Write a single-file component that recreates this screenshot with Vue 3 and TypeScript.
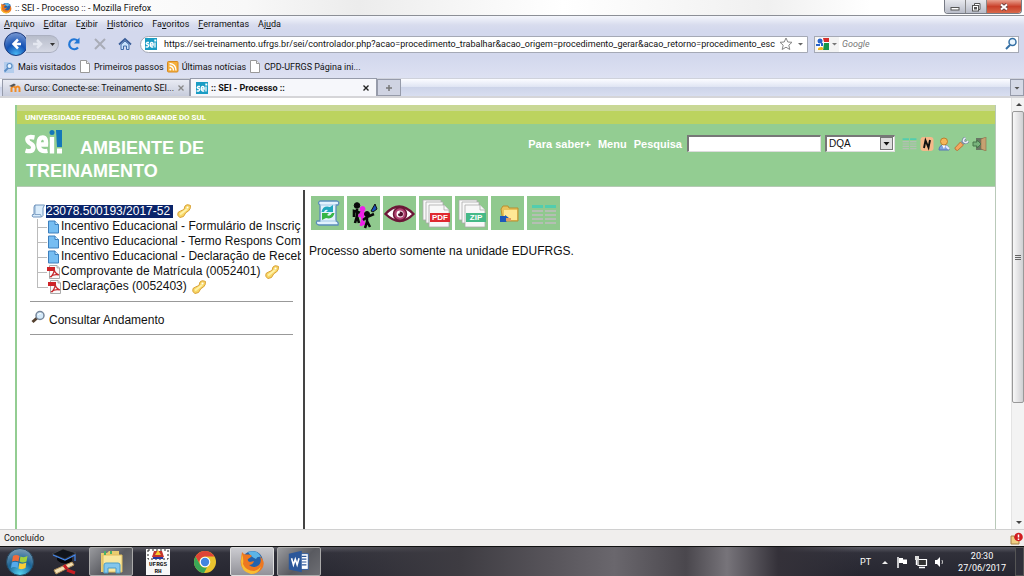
<script setup lang="ts">
import { ref } from 'vue'

const menus: [string, string, string][] = [
  ['', 'A', 'rquivo'], ['', 'E', 'ditar'], ['E', 'x', 'ibir'], ['', 'H', 'istórico'],
  ['Fa', 'v', 'oritos'], ['', 'F', 'erramentas'], ['Aj', 'u', 'da'],
]
const bookmarks = [
  { label: 'Mais visitados', kind: 'search' },
  { label: 'Primeiros passos', kind: 'page' },
  { label: 'Últimas notícias', kind: 'rss' },
  { label: 'CPD-UFRGS Página ini...', kind: 'page' },
]
const documents = [
  { label: 'Incentivo Educacional - Formulário de Inscriçã', pdf: false },
  { label: 'Incentivo Educacional - Termo Respons Comp', pdf: false },
  { label: 'Incentivo Educacional - Declaração de Recebi', pdf: false },
  { label: 'Comprovante de Matrícula (0052401)', pdf: true },
  { label: 'Declarações (0052403)', pdf: true },
]
const url = ref('https://sei-treinamento.ufrgs.br/sei/controlador.php?acao=procedimento_trabalhar&acao_origem=procedimento_gerar&acao_retorno=procedimento_esc')
const webSearch = ref('')
const pesquisa = ref('')
const unidade = ref('DQA')
</script>

<template>
  <div class="desktop">
    <svg class="defs" aria-hidden="true">
      <symbol id="key" viewBox="0 0 14 14">
        <path d="M8 2Q10 0 12 1L13.500 1.500Q13.800 5 11.500 7L9 8.500L8 10L6.500 12.500L3 13.500L.8 11.500L1 8.500L3.500 7L7 5.500Z" fill="#f8d766" stroke="#d9a136" />
        <path d="M3 10.500L10 5" stroke="#fff2a8" stroke-width="2" /><circle cx="10.500" cy="3.500" r="1" fill="#fff" />
      </symbol>
      <symbol id="page" viewBox="0 0 12 13">
        <path d="M1.500.5H7.500L10.500 3.500V12.500H1.500Z" fill="#fff" stroke="#999" /><path d="M7.500.5V3.500H10.500" fill="#eee" stroke="#999" />
      </symbol>
      <symbol id="sei" viewBox="0 0 12 12">
        <rect width="12" height="12" fill="#1a9cc4" />
        <g fill="none" stroke="#fff" stroke-width="1.300"><path d="M4 4.500H2Q.5 5.500 2 6.500H3Q4.300 8 2.800 9H.6M5.200 7H8.200Q8.200 4.500 6.700 4.500Q5.200 4.500 5.200 7Q5.300 9.200 8.300 9M10 4.500V9.500" /></g>
        <rect x="9.300" y="1.500" width="2" height="2" fill="#fff" />
      </symbol>
      <symbol id="grid" viewBox="0 0 26 24">
        <path d="M1 3.500H12M14 3.500H25" stroke="#52cdae" stroke-width="3" />
        <path d="M1 8H12M14 8H25M1 12H12M14 12H25M1 16H12M14 16H25M1 20H12M14 20H25" stroke="#b4bfb3" stroke-width="2" />
      </symbol>
      <symbol id="firefox" viewBox="0 0 26 26">
        <circle cx="13.500" cy="12.500" r="10.500" fill="#2463ac" /><path d="M9 3Q18 0 22 8Q18 7 17 10Q12 8 9 3Z" fill="#5cb4e6" />
        <path d="M3 3Q5 6 8 5.500Q12 5 13 7Q11 9 9 10Q8 12 11 13L15 12Q14 16 10 16Q15 20 20 16Q23 13 21 7Q28 14 22 21Q16 27 8 23Q0 18 2 10Z" fill="#ed7720" />
        <path d="M3 5Q5 10 4 15Q7 22 15 22Q20 21 22 17Q20 25 12 25Q2 23 2 12Z" fill="#f9bd32" />
      </symbol>
    </svg>

    <header class="titlebar">
      <svg class="i12" viewBox="0 0 26 26"><use href="#firefox" /></svg>
      <h1>:: SEI - Processo :: - Mozilla Firefox</h1>
      <div class="winbtns">
        <button aria-label="Minimizar"><svg width="10" height="12" viewBox="0 0 10 12"><rect x="1" y="6.500" width="8" height="2.500" fill="#fff" stroke="#555" /></svg></button>
        <button aria-label="Restaurar"><svg width="10" height="12" viewBox="0 0 10 12"><path d="M3.500 4V2.500H9V8.500H7.500" fill="#fff" stroke="#555" /><rect x="1.500" y="4.500" width="6" height="5.500" fill="#fff" stroke="#555" /><rect x="3.500" y="6.500" width="2" height="1.500" fill="none" stroke="#555" /></svg></button>
        <button class="close" aria-label="Fechar"><svg width="10" height="12" viewBox="0 0 10 12"><path d="M2 3.500L8 8.500M8 3.500L2 8.500" stroke="#6d4444" stroke-width="3.600" /><path d="M2 3.500L8 8.500M8 3.500L2 8.500" stroke="#fff" stroke-width="2" /></svg></button>
      </div>
    </header>

    <nav class="menubar">
      <button v-for="m in menus" :key="m[1] + m[2]">{{ m[0] }}<u>{{ m[1] }}</u>{{ m[2] }}</button>
    </nav>

    <div class="navbar">
      <div class="backfwd">
        <button class="back" aria-label="Voltar"><svg width="24" height="24" viewBox="0 0 24 24"><defs><radialGradient id="bg" cx=".5" cy=".95" r=".9"><stop offset="0" stop-color="#48b8f4" /><stop offset=".5" stop-color="#1552b4" /><stop offset="1" stop-color="#6f92d0" /></radialGradient></defs><circle cx="12" cy="12" r="11.500" fill="url(#bg)" stroke="#203c7c" /><path d="M14 7.500L9.500 12L14 16.500M9.500 12H17" fill="none" stroke="#fff" stroke-width="2.500" /></svg></button>
        <button class="fwd" aria-label="Avançar"><svg width="30" height="14" viewBox="0 0 30 14"><path d="M10 3L14 7L10 11M6 7H13" fill="none" stroke="#e4e7f0" stroke-width="2.500" /><path d="M23 6H28L25.500 9Z" fill="#333" /></svg></button>
      </div>
      <button class="tool" aria-label="Recarregar"><svg width="14" height="14" viewBox="0 0 14 14"><path d="M11 10.500A5 5 0 1 1 10.500 3.500" fill="none" stroke="#2277d6" stroke-width="2.200" /><path d="M12.500.5V6.500H7Z" fill="#2277d6" /></svg></button>
      <button class="tool" aria-label="Parar"><svg width="14" height="14" viewBox="0 0 14 14"><path d="M2 2L12 12M12 2L2 12" stroke="#a9acb7" stroke-width="2" /></svg></button>
      <button class="tool" aria-label="Início"><svg width="14" height="14" viewBox="0 0 14 14"><path d="M1 7.500L7 2L13 7.500" fill="none" stroke="#3a5e99" stroke-width="1.700" /><path d="M3 7.500L7 4L11 7.500V12.500H8.500V9H5.500V12.500H3Z" fill="#c9e2fb" stroke="#416da8" /></svg></button>
      <div class="urlbox">
        <svg class="i12" viewBox="0 0 12 12"><use href="#sei" /></svg>
        <input v-model="url" aria-label="Endereço">
        <button aria-label="Favoritar"><svg width="14" height="14" viewBox="0 0 14 14"><path d="M7 1L8.800 5L13 5.300L9.800 8.200L10.800 12.500L7 10.200L3.200 12.500L4.200 8.200L1 5.300L5.200 5Z" fill="#fff" stroke="#888" /></svg></button>
        <button aria-label="Histórico de endereços"><svg width="14" height="14" viewBox="0 0 14 14"><path d="M5 6H10L7.500 8.500Z" fill="#666" /></svg></button>
      </div>
      <div class="searchbox">
        <button class="engine" aria-label="Motor de busca"><svg width="24" height="14" viewBox="0 0 24 14"><rect x="2" y="1" width="12" height="12" fill="#fff" /><path d="M8 1H14V5H9Z" fill="#d62f2b" /><path d="M9 6H14V13H8Z" fill="#16964a" /><path d="M7 10Q10 12 7 13H3Q2 10 7 10" fill="#f1b71c" /><circle cx="5" cy="4" r="2.500" fill="#2963c8" /><path d="M1 7H5V9H1ZM6 6H8V9H6Z" fill="#2963c8" /><path d="M17 6H22L19.500 8.500Z" fill="#777" /></svg></button>
        <input v-model="webSearch" aria-label="Pesquisar na web" placeholder="Google">
        <button aria-label="Pesquisar na web"><svg width="14" height="14" viewBox="0 0 14 14"><circle cx="8.500" cy="5" r="3.500" fill="#eaf6ff" stroke="#3570a5" stroke-width="1.500" /><path d="M6 8L2 12" stroke="#3570a5" stroke-width="2" /></svg></button>
      </div>
    </div>

    <nav class="bookmarks">
      <a v-for="b in bookmarks" :key="b.label" href="#">
        <svg v-if="b.kind === 'page'" width="12" height="13" viewBox="0 0 12 13"><use href="#page" /></svg>
        <svg v-else-if="b.kind === 'rss'" width="12" height="12" viewBox="0 0 12 12"><rect x=".5" y=".5" width="10.500" height="10.500" rx="1" fill="#f5af3c" stroke="#d78a20" /><path d="M2.500 2.500Q9 3 9 9.500M2.500 5Q6.500 5.500 6.500 9.500" fill="none" stroke="#fff" stroke-width="1.300" /><circle cx="3.300" cy="8.500" r="1" fill="#fff" /></svg>
        <svg v-else width="12" height="12" viewBox="0 0 12 12"><path d="M1 1H8L11 4V12H1Z" fill="#b4cdec" /><circle cx="6.500" cy="5" r="2.500" fill="#e7f3ff" stroke="#5b8dc5" stroke-width="1.200" /><path d="M5 7L1.500 10.500" stroke="#5b8dc5" stroke-width="1.800" /></svg>
        <span>{{ b.label }}</span>
      </a>
    </nav>

    <div class="tabs">
      <div class="tab first">
        <svg width="12" height="12" viewBox="0 0 12 12"><path d="M2.500 10V6Q4.500 3 6.500 6V10M6.500 6Q9 3 10.500 6V10" fill="none" stroke="#ef8c28" stroke-width="2" /><path d="M0 4L5 1.500L7 3L3 5Z" fill="#555" /></svg>
        <span>Curso: Conecte-se: Treinamento SEI...</span>
        <button aria-label="Fechar aba"><svg width="8" height="8" viewBox="0 0 8 8"><path d="M1.500 1.500L6.500 6.500M6.500 1.500L1.500 6.500" stroke="#888" stroke-width="1.300" /></svg></button>
      </div>
      <div class="tab active">
        <svg class="i12" viewBox="0 0 12 12"><use href="#sei" /></svg>
        <span>:: SEI - Processo ::</span>
        <button aria-label="Fechar aba"><svg width="8" height="8" viewBox="0 0 8 8"><path d="M1.500 1.500L6.500 6.500M6.500 1.500L1.500 6.500" stroke="#222" stroke-width="1.400" /></svg></button>
      </div>
      <button class="newtab" aria-label="Nova aba"><svg width="8" height="8" viewBox="0 0 8 8"><path d="M4 1V7M1 4H7" stroke="#777" stroke-width="1.500" /></svg></button>
      <button class="alltabs" aria-label="Listar abas"><svg width="8" height="8" viewBox="0 0 8 8"><path d="M1.500 3H6.500L4 5.500Z" fill="#555" /></svg></button>
    </div>

    <div class="viewport">
      <main class="sei">
        <div class="strip"></div>
        <div class="org">UNIVERSIDADE FEDERAL DO RIO GRANDE DO SUL</div>
        <div class="banner">
          <div class="brand">
            <svg width="38" height="24" viewBox="0 0 38 24" role="img" aria-label="sei!"><g fill="none" stroke="#fff" stroke-width="4.400"><path d="M9.500 7.500Q2 6 2.400 9.500Q2.500 12 5.500 13.500Q8.500 15 8.300 18Q7.500 22.500 .5 20.500M14 14.500H21Q21.500 7.500 17.800 7.500Q13.500 7.500 13.500 14.500Q14 22.500 22.500 20.800M27 7V23.500" /></g><rect x="32" y="18.500" width="5" height="5" fill="#fff" /><circle cx="27" cy="2.500" r="2.500" fill="#1477b8" /><path d="M31 0H37V17H32Z" fill="#1477b8" /></svg>
            <h2>AMBIENTE DE TREINAMENTO</h2>
          </div>
          <div class="actions">
            <a href="#">Para saber+</a>
            <a href="#">Menu</a>
            <label for="pesquisa">Pesquisa</label>
            <input id="pesquisa" v-model="pesquisa">
            <div class="unit">
              <select v-model="unidade" aria-label="Unidade"><option>DQA</option></select>
              <svg width="13" height="13" viewBox="0 0 13 13"><rect x=".5" y=".5" width="12" height="12" fill="#dedede" stroke="#777" /><path d="M3.500 5H9.500L6.500 8.500Z" fill="#111" /></svg>
            </div>
            <a href="#" class="ic" aria-label="Controle de Processos"><svg width="15" height="14" viewBox="0 0 26 24"><use href="#grid" /></svg></a>
            <a href="#" class="ic" aria-label="Novidades"><svg width="14" height="14" viewBox="0 0 14 14"><rect x=".5" y="0" width="13" height="14" rx="3" fill="#f5b98a" /><path d="M4 11L5.500 3.500L8.500 10.500L10 3" fill="none" stroke="#111" stroke-width="1.900" /></svg></a>
            <a href="#" class="ic" aria-label="Usuário"><svg width="14" height="14" viewBox="0 0 14 14"><path d="M2 13Q2 8 7 8Q12 8 12 13Z" fill="#7da2dd" stroke="#5877b8" /><path d="M5 8L7 12L8.500 8" fill="#fff" /><circle cx="7" cy="4.500" r="3.500" fill="#f4b759" stroke="#bd7f2e" /><path d="M9 9L12 12" stroke="#e8e8ff" stroke-width="2" /></svg></a>
            <a href="#" class="ic" aria-label="Configurações"><svg width="15" height="14" viewBox="0 0 15 14"><path d="M.8 11L6.500 5L9.500 8L3.500 13.500Q1.500 13.500 .8 11" fill="#f2a65e" stroke="#bb753a" /><path d="M8 6L11 3.500" stroke="#8295ae" stroke-width="4" /><path d="M11.500 1Q9 2 9.500 4.500Q12 7 14 4" fill="none" stroke="#6e809b" stroke-width="3" /><path d="M11.500 1Q9 2 9.500 4.500Q12 7 14 4" fill="none" stroke="#e9eef5" stroke-width="1.600" /></svg></a>
            <a href="#" class="ic" aria-label="Sair"><svg width="15" height="14" viewBox="0 0 15 14"><path d="M4 1H13V13H4Z" fill="#687663" /><path d="M9 2L14 0V14L9 12Z" fill="#c6a171" stroke="#8b6b48" stroke-width=".6" /><path d="M1 5H5V3L9 7L5 11V9H1Z" fill="#77b27b" stroke="#47764b" /></svg></a>
          </div>
        </div>

        <div class="frames">
          <section class="tree">
            <a class="root" href="#">
              <svg width="15" height="14" viewBox="0 0 15 14"><path d="M4 1H13.500L12 4V11.500L10.500 13H2Q.5 12.500 1.500 10.500H3V3Z" fill="#d9ecfb" stroke="#7094bd" /><path d="M4 1V10.500H9.500L10.500 13" fill="none" stroke="#7094bd" stroke-width=".8" /></svg>
              <span>23078.500193/2017-52</span>
              <svg width="14" height="14"><use href="#key" /></svg>
            </a>
            <ul>
              <li v-for="d in documents" :key="d.label">
                <a href="#">
                  <svg v-if="d.pdf" width="14" height="14" viewBox="0 0 14 14"><path d="M2.500.5H10L12.500 3V13.500H2.500Z" fill="#fafafa" stroke="#aaa" /><path d="M10 .5V3H12.500" fill="#ddd" stroke="#999" stroke-width=".7" /><rect x="0" y="2" width="8" height="4" fill="#cf2328" /><path d="M4 12Q8 7 7 3Q7 8 12 10Q7 8.500 3 12" fill="none" stroke="#c6282c" stroke-width="1.300" /></svg>
                  <svg v-else width="14" height="14" viewBox="0 0 14 14"><path d="M1.500 1H8L11.500 4.500V13H1.500Z" fill="#76bdf2" stroke="#3d7fbd" /><path d="M8 1V4.500H11.500" fill="#d0ebff" stroke="#3d7fbd" /></svg>
                  <span>{{ d.label }}</span>
                  <svg v-if="d.pdf" width="14" height="14" class="dockey"><use href="#key" /></svg>
                </a>
              </li>
            </ul>
            <hr>
            <a class="consult" href="#">
              <svg width="15" height="15" viewBox="0 0 15 15"><path d="M6 8L1.500 12" stroke="#54402f" stroke-width="3" /><circle cx="9" cy="5.500" r="4" fill="#d4eafa" stroke="#76869a" stroke-width="1.500" /><path d="M7 5Q8 3 10 3.500" stroke="#fff" fill="none" /></svg>
              <span>Consultar Andamento</span>
            </a>
            <hr>
          </section>
          <section class="work">
            <div class="tiles">
              <button aria-label="Consultar processo"><svg width="33" height="33" viewBox="0 0 33 33"><path d="M9 4H26Q29 5 27 8H25V24Q28 25 27 28H8Q4 27 6 24H9V8Q6 6 9 4Z" fill="#e3f2fd" stroke="#5b8dba" stroke-width="1.300" /><path d="M9 8H25M9 24H25" stroke="#a4c9e6" /><path d="M10.500 15Q12 8 19 10L22 8V15H15L17 13Q14 12 13 15Z" fill="#20a7bd" /><path d="M23.500 16Q22 23 15 21L11 23V16H18L16 18Q19 20 21 16Z" fill="#37b646" /></svg></button>
              <button aria-label="Acompanhamento"><svg width="33" height="33" viewBox="0 0 33 33"><g fill="#090909" stroke="#090909"><circle cx="10" cy="8.500" r="2.800" /><path d="M10 12V19L8 26M10 19L12 26M7 20L7 14L14 16" fill="none" stroke-width="2.600" /></g><g fill="#ed20e7" stroke="#ed20e7"><circle cx="15.500" cy="12" r="2.500" /><path d="M15.500 15V23L14 29M15.500 22L17 28M12 20L15 15L20 19" fill="none" stroke-width="3" /></g><g fill="#090909" stroke="#090909"><circle cx="20" cy="17" r="2.500" /><path d="M20 19V25L18 31M20 24L23 30M16 23L20 20L27 17" fill="none" stroke-width="2.500" /></g><path d="M24 14L28 7L30 12L26 15Z" fill="#174ebc" stroke="#111" /></svg></button>
              <button aria-label="Ciência"><svg width="33" height="33" viewBox="0 0 33 33"><path d="M2.500 17Q16 2 30.500 17Q17 31 2.500 17Z" fill="#fff" stroke="#6c1737" stroke-width="2.400" /><circle cx="17" cy="17" r="6.500" fill="#b14472" stroke="#6c1737" stroke-width="1.500" /><circle cx="17" cy="17" r="3.500" fill="#fff" /><circle cx="17.500" cy="17" r="2.500" fill="#50102c" /><circle cx="15.500" cy="15.500" r="1.300" fill="#fff" /></svg></button>
              <button v-for="f in ['PDF', 'ZIP']" :key="f" :aria-label="'Gerar ' + f"><svg width="33" height="33" viewBox="0 0 33 33"><g fill="#f8f8f8" stroke="#aaa" stroke-width=".8"><path d="M4 3H22V23H4Z" /><path d="M7 5H24V26H7Z" /><path d="M10 8H25L30 13V30H10Z" /><path d="M25 8V13H30" /></g><rect x="11" y="16" width="20" height="9" :fill="f === 'PDF' ? '#df2930' : '#46b988'" /><text x="21" y="23">{{ f }}</text></svg></button>
              <button aria-label="Enviar processo"><svg width="33" height="33" viewBox="0 0 33 33"><path d="M10 12L12 9H17L18 11H27V24H12Z" fill="#e9c35b" stroke="#b98e30" /><path d="M13 13H26V23H13Z" fill="#ffe895" /><path d="M9 19H14V18L18 21L15 25H9Z" fill="#1d58ba" /><path d="M15 21H20L20 24H15Z" fill="#de9d65" /></svg></button>
              <button aria-label="Controle de prazos"><svg width="33" height="33" viewBox="0 0 33 33"><use href="#grid" x="4" y="6" width="26" height="24" /></svg></button>
            </div>
            <p>Processo aberto somente na unidade EDUFRGS.</p>
          </section>
        </div>
      </main>
      <div class="scroll" aria-hidden="true">
        <svg width="13" height="13" viewBox="0 0 13 13"><path d="M4 8H10L7 5Z" fill="#444" /></svg>
        <div class="thumb"><i></i><i></i><i></i></div>
        <svg width="13" height="13" viewBox="0 0 13 13"><path d="M4 5H10L7 8Z" fill="#444" /></svg>
      </div>
    </div>

    <footer class="status">
      <span>Concluído</span>
      <svg width="13" height="13" viewBox="0 0 13 13"><path d="M1 4H4L5 6H9V12H1Z" fill="#f0cf83" stroke="#a88145" /><circle cx="8.500" cy="5" r="4.300" fill="#d11d20" /><path d="M8.500 2.500V5.500M8.500 6.500V8" stroke="#fff" stroke-width="1.500" /></svg>
    </footer>

    <footer class="taskbar">
      <button class="start" aria-label="Iniciar"><svg width="28" height="28" viewBox="0 0 28 28"><defs><radialGradient id="orb" cx=".5" cy=".95" r="1"><stop offset="0" stop-color="#55d4f2" /><stop offset=".5" stop-color="#1c6496" /><stop offset="1" stop-color="#8ba4b7" /></radialGradient></defs><circle cx="14" cy="14" r="13.500" fill="url(#orb)" stroke="#25475f" /><path d="M7 8Q10 6 13.500 8L12.500 13.500Q9.500 12 6 13.500Z" fill="#f26b3a" /><path d="M14.500 8.500Q18 10 21.500 8L20.500 13.500Q17 15.500 13.500 13.500Z" fill="#a2d13c" /><path d="M5.800 14.500Q9 13 12.300 14.500L11.500 20Q8 18 5 20Z" fill="#55a9ea" /><path d="M13.300 15Q17 16.500 20.300 14.500L19.500 20Q16 22 12.500 20.500Z" fill="#fbcd36" /></svg></button>
      <button aria-label="Treinamento"><svg width="28" height="28" viewBox="0 0 28 28"><path d="M7 9L10 7H22L22 14Q13 18 7 12Z" fill="#05070a" /><path d="M2 6L13 1L26 5L15 11Z" fill="#10141b" stroke="#555" stroke-width=".6" /><path d="M3 7L15 12L25 7V13" fill="none" stroke="#4488ef" stroke-width="1.200" /><path d="M4 22L22 14L24 17L6 26Z" fill="#f1dfb4" stroke="#b08e58" /><path d="M14 17L17 21M17 22L25 25" fill="none" stroke="#c51d22" stroke-width="3" /></svg></button>
      <button class="open" aria-label="Explorador"><svg width="28" height="28" viewBox="0 0 28 28"><path d="M4 5H10L12 3H22V7H25V24H4Z" fill="#e9cc70" /><path d="M6 7H25V24H6Z" fill="#f8e79f" stroke="#dfbd5d" /><path d="M8 3V7M14 3V6" stroke="#4ab167" stroke-width="2" /><path d="M7 25V17Q7 15 9 15H21Q23 15 23 17V25H19V20H11V25Z" fill="#83c6ec" stroke="#4b9cc8" /></svg></button>
      <button aria-label="UFRGS RH"><svg width="28" height="28" viewBox="0 0 28 28"><rect x="2" y="1" width="24" height="26" fill="#f7f7f7" /><path d="M4 2H24V11H4Z" fill="#fff" stroke="#222" stroke-dasharray="2 2" /><path d="M8 9Q14 12 20 9L18 3L10 3Z" fill="#c3342d" /><path d="M11 7L14 2L17 7Z" fill="#f4ca30" /><path d="M9 10H19" stroke="#2638a0" stroke-width="2" /><text x="14" y="18">UFRGS</text><text x="14" y="25">RH</text></svg></button>
      <button aria-label="Chrome"><svg width="28" height="28" viewBox="0 0 28 28"><circle cx="14" cy="14" r="11" fill="#eac32e" /><path d="M4.500 8.500A11 11 0 0 1 23.500 8.500H14A5.500 5.500 0 0 0 9 16.500Z" fill="#de4437" /><path d="M4.500 8.500L9.200 17A5.500 5.500 0 0 0 16 19.200L13 25A11 11 0 0 1 4.500 8.500Z" fill="#3aa757" /><circle cx="14" cy="14" r="5.300" fill="#fff" /><circle cx="14" cy="14" r="4.200" fill="#4285df" /></svg></button>
      <button class="open focus" aria-label="Firefox"><svg width="26" height="26" viewBox="0 0 26 26"><use href="#firefox" /></svg></button>
      <button class="open" aria-label="Word"><svg width="26" height="26" viewBox="0 0 28 28"><path d="M12 5H24V22H12Z" fill="#fff" stroke="#2b579a" /><path d="M17 8H22M17 11H22M17 14H22M17 17H22" stroke="#2b579a" stroke-width="1.300" /><path d="M3 5L17 2V25L3 22Z" fill="#2b579a" /><path d="M6 10L8 17L10 11L12 17L14 10" fill="none" stroke="#fff" stroke-width="1.700" /></svg></button>
      <div class="tray">
        <span class="lang">PT</span>
        <button aria-label="Ícones ocultos"><svg width="10" height="12" viewBox="0 0 10 12"><path d="M2 8H8L5 5Z" fill="#eee" /></svg></button>
        <button aria-label="Central de Ações"><svg width="14" height="14" viewBox="0 0 14 14"><path d="M3 2V13" stroke="#fff" stroke-width="1.500" /><path d="M4 3H8V4.500H12V9H8V8H4Z" fill="#fff" /></svg></button>
        <button aria-label="Rede"><svg width="14" height="14" viewBox="0 0 14 14"><path d="M4 4.500H12.500V10.500H4Z" fill="#333" stroke="#fff" stroke-width="1.200" /><path d="M5 12.500H11M2.500 2V10" stroke="#fff" stroke-width="1.400" /><path d="M1 1H5V5H1Z" fill="#ddd" /></svg></button>
        <button aria-label="Volume"><svg width="14" height="14" viewBox="0 0 14 14"><path d="M2 5H4L7 2V12L4 9H2Z" fill="#fff" /><path d="M9 5Q10 7 9 9" fill="none" stroke="#ccc" /></svg></button>
        <time class="clock"><span>20:30</span><span>27/06/2017</span></time>
        <button class="peek" aria-label="Mostrar área de trabalho"></button>
      </div>
    </footer>
  </div>
</template>

<style>
html, body { margin: 0; height: 100%; overflow: hidden; }
#app { height: 100%; }
</style>

<style scoped>
* { box-sizing: border-box; }
.desktop { display: flex; flex-direction: column; height: 100vh; overflow: hidden; font: 9px/14px Roboto, "Open Sans", sans-serif; color: #111; background: #fff; }
.defs { position: absolute; width: 0; height: 0; }
button { border: 0; padding: 0; margin: 0; background: none; font: inherit; color: inherit; display: flex; align-items: center; justify-content: center; }
input { font: inherit; color: inherit; border: 0; padding: 0; min-width: 0; outline: 0; background: transparent; }
a { color: inherit; text-decoration: none; }
svg { flex: none; display: block; }
h1, h2, p, ul { margin: 0; padding: 0; font-size: inherit; font-weight: inherit; list-style: none; }
.i12 { width: 12px; height: 12px; }
.titlebar { display: flex; align-items: center; gap: 3px; height: 16px; flex: none; background: linear-gradient(90deg, #fff 0, #f8f8f8 24%, #ececec 35%, #f6f6f6 45%, #fff 55%, #f0f0f0 75%, #fff 85%); border-bottom: 1px solid #8c8f96; }
.winbtns { margin-left: auto; margin-right: 2px; display: flex; align-self: flex-start; height: 14px; border: 1px solid #777b85; border-top: 0; border-radius: 0 0 4px 4px; overflow: hidden; }
.winbtns button { width: 21px; background: linear-gradient(#e8e9ee, #b8bcc8); border-right: 1px solid #888; }
.winbtns .close { width: 34px; background: linear-gradient(#e9a18f, #c9402a 50%, #d8684a); border: 0; }
.menubar { display: flex; gap: 9px; padding: 0 4px; height: 15px; flex: none; background: linear-gradient(#f4f6fc, #d8dcee 60%, #d3d8ed); }
.navbar { display: flex; align-items: center; height: 26px; flex: none; background: #d3d8ed; padding: 0 5px 0 4px; }
.backfwd { display: flex; align-items: center; width: 56px; margin-right: 6px; }
.fwd { height: 18px; width: 33px; margin-left: -2px; background: linear-gradient(#b8bdcb, #d6d9e5); border: 1px solid #abb0c0; border-left: 0; border-radius: 0 9px 9px 0; }
.tool { width: 16px; height: 20px; margin-right: 10px; }
.tool + .tool { margin-right: 9px; }
.urlbox { display: flex; align-items: center; flex: 1; height: 17px; background: #fff; border: 1px solid #a5a9b5; border-radius: 9px 0 0 9px; padding: 0 0 0 4px; margin-left: -2px; }
.urlbox input { flex: 1; margin-left: 7px; margin-right: 1px; }
.searchbox { display: flex; align-items: center; flex: 0 1 205px; height: 17px; margin-left: 6px; background: #fff; border: 1px solid #a5a9b5; }
.searchbox input { flex: 1; padding-left: 3px; font-style: italic; }
.searchbox input::placeholder { color: #777; opacity: 1; }
.engine { background: #f3f3f3; height: 15px; }
.bookmarks { display: flex; align-items: center; gap: 3px; height: 21px; flex: none; padding: 0 3px 2px; background: linear-gradient(#d3d8ed, #dde1f2); }
.bookmarks a { display: flex; align-items: center; gap: 3px; }
.tabs { display: flex; align-items: flex-end; height: 20px; flex: none; padding-left: 2px; background: linear-gradient(#b8bcc8 0, #fafbff 8%, #dfe4f3 50%, #cdd4e9 52%, #d8def0); border-bottom: 2px solid #d5d5d8; }
.tab { display: flex; align-items: center; gap: 3px; height: 17px; border: 1px solid #969baa; border-bottom: 0; padding: 0 6px; background: linear-gradient(#e9ebf3, #c7ccdc); }
.tab button { margin-left: auto; }
.tab.first { width: 188px; white-space: nowrap; }
.tab.active { width: 187px; height: 18px; background: #f6f7fb; font-weight: 700; padding: 0 6px 0 5px; }
.newtab { width: 24px; height: 17px; border: 1px solid #969baa; background: #cfd3e2; }
.alltabs { margin-left: auto; width: 14px; height: 17px; border: 1px solid #969baa; background: #d5d9e6; }
.viewport { flex: 1; min-height: 0; display: flex; }
.sei { flex: 1; min-width: 0; margin: 7px 15px 0; display: flex; flex-direction: column; border-left: 2px solid #93cd92; border-right: 1px solid #b9c9b9; font-family: "Liberation Sans", Arial, sans-serif; }
.strip { height: 6px; background: #c9d895; flex: none; }
.org { height: 13px; flex: none; background: #bcd35f; color: #fff; font: 700 8px/13px Roboto, sans-serif; padding-left: 8px; }
.banner { flex: none; height: 63px; display: flex; justify-content: space-between; background: #93cd92; border-bottom: 1px solid #b5c9b4; padding: 6px 8px 0; }
.brand { width: 200px; color: #fff; font: 700 18px/23px "Liberation Sans", Arial, sans-serif; }
.brand svg { float: left; margin-right: 17px; }
.brand h2 { padding-top: 7px; padding-left: 1px; }
.actions { display: flex; align-items: center; align-self: flex-start; gap: 7px; height: 19px; margin-top: 4px; color: #fff; font: 700 11px/16px "Liberation Sans", Arial, sans-serif; }
.actions > input { width: 134px; height: 17px; background: #fff; color: #111; border: 1px solid #ddd; border-top: 2px solid #777; border-left: 2px solid #777; margin-left: -2px; margin-right: -3px; font-weight: 400; }
.unit { display: grid; align-items: center; color: #111; }
.unit > * { grid-area: 1 / 1; }
.unit svg { justify-self: end; margin-right: 2px; pointer-events: none; }
select { appearance: none; width: 70px; height: 17px; padding: 0 2px; background: #fff; color: #111; border: 1px solid #ddd; border-top: 2px solid #777; border-left: 2px solid #777; border-radius: 0; font: 10px/14px "Liberation Sans", Arial, sans-serif; }
.ic { margin-right: -4px; }
.ic:last-child { margin-right: 0; }
.frames { flex: 1; min-height: 0; display: flex; padding-top: 3px; font-size: 12px; line-height: 15px; }
.tree { flex: 0 0 288px; min-width: 0; border-right: 2px solid #444; padding: 14px 2px 0 14px; white-space: nowrap; }
.root, .consult, .tree li a { display: flex; align-items: center; }
.root { margin-bottom: 1px; }
.root span { background: #0a246a; color: #fff; line-height: 13px; padding-right: 3px; margin-right: 4px; }
.tree ul { padding-left: 6px; overflow: hidden; }
.tree li { border-left: 1px solid #bbb; height: 15px; }
.tree li::before { content: ""; float: left; width: 9px; height: 8px; border-bottom: 1px solid #bbb; }
.tree li:last-child { border-color: transparent; }
.tree li:last-child::before { border-left: 1px solid #bbb; margin-left: -1px; width: 10px; }
.dockey { margin-left: 5px; }
.tree hr { border: 0; border-top: 1px solid #999; margin: 7px 8px 0 -1px; }
.consult { height: 26px; padding-top: 10px; gap: 3px; }
.consult svg { margin-bottom: 6px; }
.consult + hr { margin-top: 6px; }
.work { flex: 1; padding: 6px 6px; }
.tiles { display: flex; gap: 3px; }
.tiles button { background: #90c98e; width: 33px; height: 34px; }
.tiles text { font: 700 8px "Liberation Sans", sans-serif; fill: #fff; text-anchor: middle; }
.work p { margin-top: 14px; margin-left: -2px; }
.scroll { width: 13px; display: flex; flex-direction: column; justify-content: space-between; background: #f3f3f3; border-left: 1px solid #e4e4e4; }
.thumb { width: 12px; flex: 0 0 292px; margin-bottom: auto; border: 1px solid #999; border-radius: 2px; background: linear-gradient(90deg, #f8f8f8, #d0d0d3); display: flex; flex-direction: column; align-items: center; justify-content: center; gap: 1px; }
.thumb i { width: 6px; height: 1px; background: #666; }
.status { display: flex; align-items: center; justify-content: space-between; height: 17px; flex: none; background: #f0eeed; border-top: 1px solid #d0d0d0; padding: 0 1px 0 4px; }
.taskbar { display: flex; gap: 3px; height: 30px; flex: none; background: linear-gradient(90deg, transparent 30%, #3e3c42 45%, #58555b 54%, #6a676d 60%, #4a474d 67%, #77747a 71%, #343139 76%, transparent 84%), linear-gradient(#5d5d66, #30303a 20%, #262630); border-top: 1px solid #111; padding-left: 6px; color: #fff; }
.taskbar > button { width: 44px; border-radius: 2px; }
.taskbar > .start { width: 28px; margin-right: 5px; }
.taskbar > .open { background: linear-gradient(135deg, #999a9e, #595a60 55%, #6d6e73); border: 1px solid #aaa; }
.taskbar > .focus { background: linear-gradient(#cbcbd0, #929299); border-color: #ddd; }
.taskbar text { font: 700 6px "Liberation Mono", monospace; text-anchor: middle; fill: #111; }
.tray { display: flex; align-items: center; gap: 5px; margin-left: auto; }
.lang { margin-right: 4px; }
.clock { display: flex; flex-direction: column; align-items: center; line-height: 12px; margin: 0 4px 0 6px; }
.peek { width: 9px; height: 29px; border: 1px solid #555; background: #30303a; }
</style>
